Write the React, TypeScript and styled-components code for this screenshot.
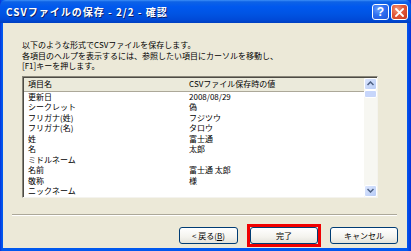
import React from 'react';
import styled, { createGlobalStyle } from 'styled-components';

const GlobalStyle = createGlobalStyle`
  html, body {
    margin: 0;
    padding: 0;
    background: #ffffff;
  }
  body {
    font-family: "Noto Sans CJK JP", "Liberation Sans", sans-serif;
  }
`;

const rows: [string, string][] = [
  ['更新日', '2008/08/29'],
  ['シークレット', '偽'],
  ['フリガナ(姓)', 'フジツウ'],
  ['フリガナ(名)', 'タロウ'],
  ['姓', '富士通'],
  ['名', '太郎'],
  ['ミドルネーム', ''],
  ['名前', '富士通 太郎'],
  ['敬称', '様'],
  ['ニックネーム', ''],
];

const App: React.FC = () => {
  return (
    <>
      <GlobalStyle />
      <Window>
        <TitleBar>
          <TitleText>CSVファイルの保存 - 2/2 - 確認</TitleText>
          <TitleButtons>
            <CaptionButton $kind="help">?</CaptionButton>
            <CaptionButton $kind="close">
              <svg width="9" height="9" viewBox="0 0 9 9">
                <path d="M1 1 L8 8 M8 1 L1 8" stroke="#fff" strokeWidth="1.8" strokeLinecap="square" />
              </svg>
            </CaptionButton>
          </TitleButtons>
        </TitleBar>

        <Body>
          <Description>
            以下のような形式でCSVファイルを保存します。<br />
            各項目のヘルプを表示するには、参照したい項目にカーソルを移動し、<br />
            [F1]キーを押します。
          </Description>

          <ListBox>
            <ListContent>
              <HeaderRow>
                <Cell>項目名</Cell>
                <Cell>CSVファイル保存時の値</Cell>
              </HeaderRow>
              {rows.map(([name, value]) => (
                <Row key={name}>
                  <Cell>{name}</Cell>
                  <Cell>{value}</Cell>
                </Row>
              ))}
            </ListContent>
            <ScrollBar>
              <ScrollButton>
                <svg width="7" height="5" viewBox="0 0 7 5">
                  <path d="M0.5 4 L3.5 1 L6.5 4" stroke="#4D6185" strokeWidth="1.5" fill="none" />
                </svg>
              </ScrollButton>
              <ScrollThumb />
              <ScrollTrack />
              <ScrollButton>
                <svg width="7" height="5" viewBox="0 0 7 5">
                  <path d="M0.5 1 L3.5 4 L6.5 1" stroke="#4D6185" strokeWidth="1.5" fill="none" />
                </svg>
              </ScrollButton>
            </ScrollBar>
          </ListBox>

          <Separator />

          <ButtonRow>
            <DialogButton>&lt; 戻る(<u>B</u>)</DialogButton>
            <Highlight>
              <DialogButton $wide>完了</DialogButton>
            </Highlight>
            <DialogButton $wide>キャンセル</DialogButton>
          </ButtonRow>
        </Body>
      </Window>
    </>
  );
};

// === STYLED COMPONENTS ===

const Window = styled.div`
  width: 411px;
  height: 251px;
  box-sizing: border-box;
  display: flex;
  flex-direction: column;
  background: linear-gradient(to right, #0831d9 0px, #0058ee 2px, #0058ee 407px, #0831d9 411px);
  padding: 0 4px 3px 3px;
  overflow: hidden;
`;

const TitleBar = styled.div`
  height: 23px;
  flex-shrink: 0;
  margin: 0 -4px 0 -3px;
  display: flex;
  align-items: center;
  justify-content: space-between;
  padding: 0 3px 0 6px;
  border-radius: 6px 6px 0 0;
  background: linear-gradient(
    to bottom,
    #3d8ff7 0%,
    #0d62e6 8%,
    #0058ee 30%,
    #0054e3 60%,
    #004ad8 85%,
    #003fc0 100%
  );
`;

const TitleText = styled.span`
  color: #ffffff;
  font-size: 10px;
  font-weight: bold;
  letter-spacing: 1px;
  text-shadow: 1px 1px 0 #0a1f6a;
  white-space: nowrap;
`;

const TitleButtons = styled.div`
  display: flex;
  gap: 2px;
  margin-top: 1px;
`;

const CaptionButton = styled.div<{ $kind: 'help' | 'close' }>`
  width: 17px;
  height: 16px;
  box-sizing: border-box;
  border: 1px solid #ffffff;
  border-radius: 3px;
  display: flex;
  align-items: center;
  justify-content: center;
  color: #ffffff;
  font-family: "Liberation Sans", sans-serif;
  font-size: 12px;
  font-weight: bold;
  line-height: 1;
  background: ${p =>
    p.$kind === 'close'
      ? 'radial-gradient(circle at 35% 30%, #f29a7a 0%, #e1583a 45%, #c7371a 100%)'
      : 'radial-gradient(circle at 35% 30%, #6aa0ff 0%, #2f6ff0 45%, #1f54d8 100%)'};
`;

const Body = styled.div`
  flex: 1;
  display: flex;
  flex-direction: column;
  background: #ece9d8;
  min-height: 0;
`;

const Description = styled.div`
  margin: 17px 0 0 19px;
  font-size: 8px;
  line-height: 10.5px;
  color: #000000;
  white-space: nowrap;
`;

const ListBox = styled.div`
  margin: 4px 0 0 19px;
  width: 356px;
  height: 122px;
  box-sizing: border-box;
  display: grid;
  grid-template-columns: 1fr 13px;
  background: #ffffff;
  border-style: solid;
  border-width: 1px;
  border-color: #8a877a #f4f3ee #f4f3ee #8a877a;
  box-shadow: inset 1px 1px 0 #4d4b44;
  padding: 1px 0 0 1px;
  overflow: hidden;
`;

const ListContent = styled.div`
  display: flex;
  flex-direction: column;
`;

const HeaderRow = styled.div`
  display: grid;
  grid-template-columns: 161px 1fr;
  height: 14px;
  align-items: center;
  background: #ebeadb;
  border-bottom: 1px solid #aca899;
  box-sizing: border-box;
  font-size: 8px;
  color: #000000;
`;

const Row = styled.div`
  display: grid;
  grid-template-columns: 161px 1fr;
  height: 10.5px;
  align-items: center;
  font-size: 8px;
  color: #000000;
`;

const Cell = styled.span`
  padding-left: 4px;
  white-space: nowrap;
  line-height: 10px;
`;

const ScrollBar = styled.div`
  display: flex;
  flex-direction: column;
  background: #f7f7f2;
`;

const ScrollButton = styled.div`
  height: 12px;
  flex-shrink: 0;
  display: flex;
  align-items: center;
  justify-content: center;
  background: linear-gradient(to bottom right, #dbe6fe, #b8ccf6);
  border: 1px solid #ffffff;
  border-radius: 2px;
  box-sizing: border-box;
`;

const ScrollThumb = styled.div`
  height: 6px;
  flex-shrink: 0;
  background: #c7d6fb;
  border: 1px solid #ffffff;
  border-radius: 2px;
`;

const ScrollTrack = styled.div`
  flex: 1;
`;

const Separator = styled.div`
  margin: 16px 10px 0 9px;
  height: 1px;
  background: #aca899;
  border-bottom: 1px solid #ffffff;
`;

const ButtonRow = styled.div`
  display: flex;
  justify-content: flex-end;
  align-items: center;
  gap: 9px;
  padding: 0 9px 0 0;
  margin-top: 8px;
`;

const Highlight = styled.div`
  border: 3px solid #f00000;
  padding: 0;
  display: flex;
`;

const DialogButton = styled.div<{ $wide?: boolean }>`
  width: ${p => (p.$wide ? '68px' : '59px')};
  height: 17px;
  box-sizing: border-box;
  display: flex;
  align-items: center;
  justify-content: center;
  font-size: 8px;
  color: #000000;
  border: 1px solid #003c74;
  border-radius: 3px;
  background: linear-gradient(to bottom, #ffffff 0%, #f4f3ee 60%, #e3e2da 100%);
  white-space: nowrap;

  u {
    text-decoration: underline;
  }
`;

export default App;
